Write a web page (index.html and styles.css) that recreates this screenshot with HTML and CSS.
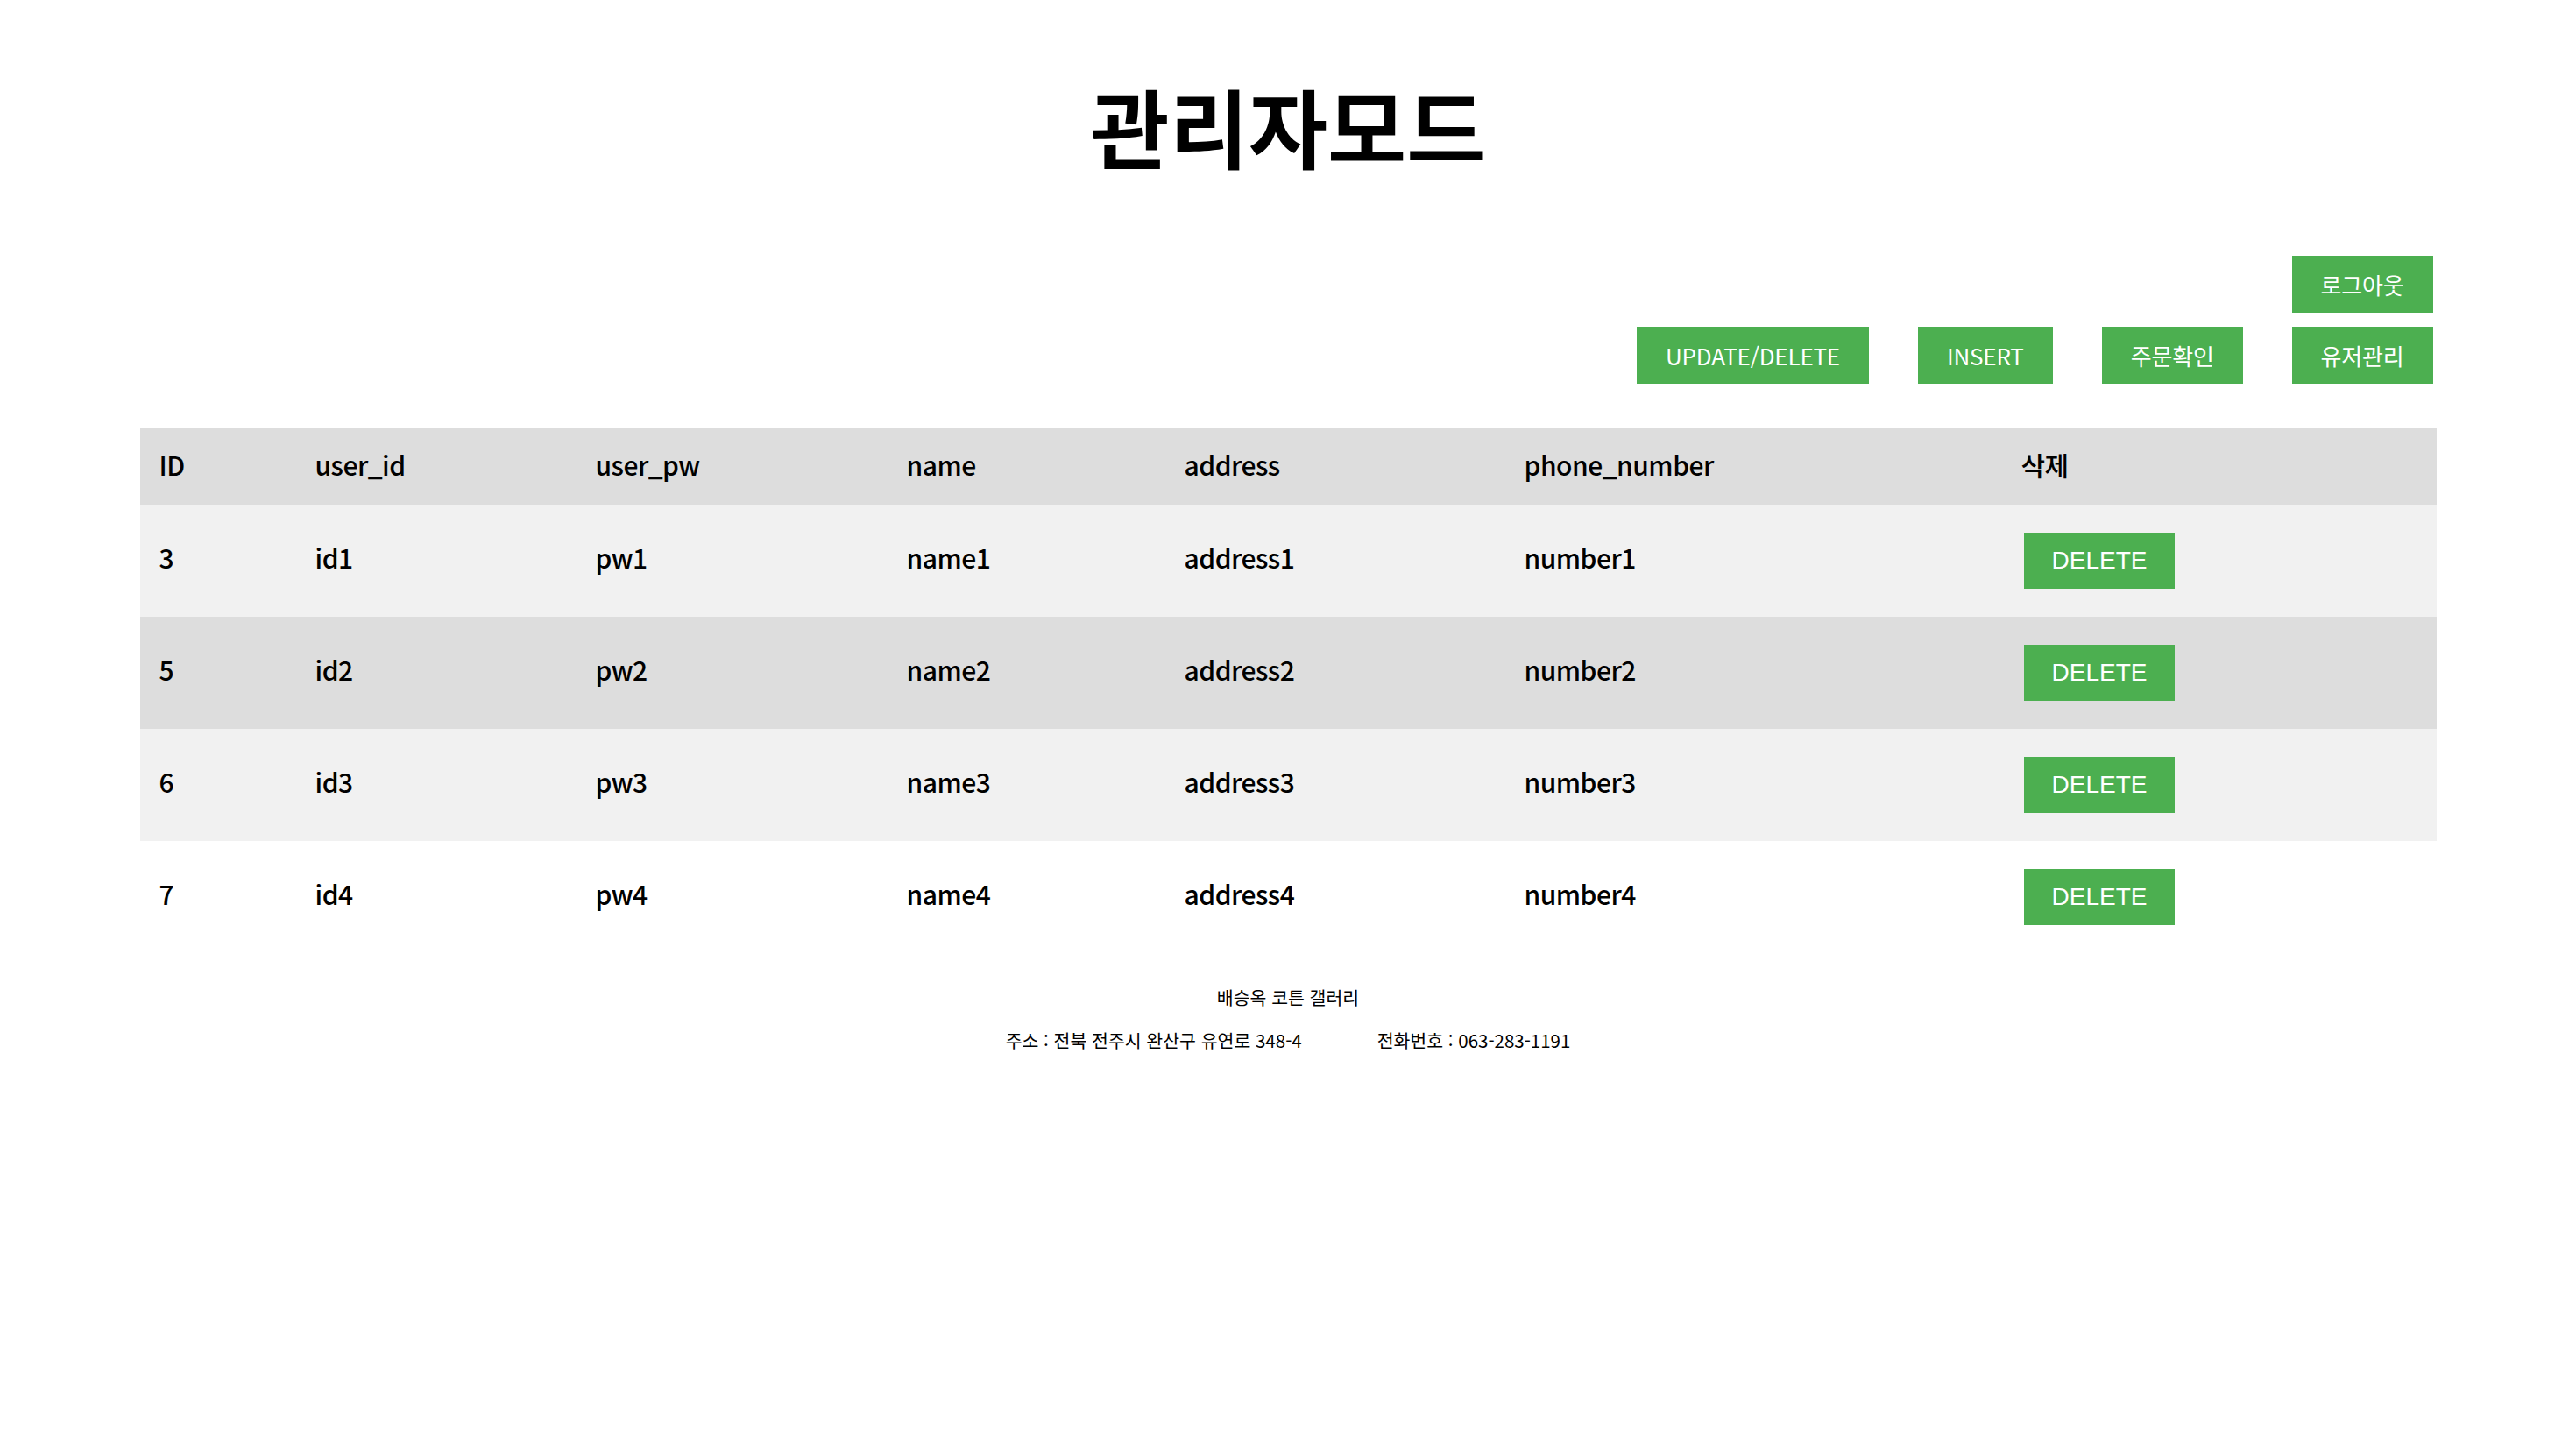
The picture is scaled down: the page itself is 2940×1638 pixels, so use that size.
FILE: index.html
```html
<!DOCTYPE html>
<html lang="ko">
<head>
<meta charset="utf-8">
<title>관리자모드</title>
<link rel="stylesheet" href="styles.css">
</head>
<body>
<header class="page-head">
  <h1 class="title">관리자모드</h1>
</header>
<nav class="actions">
  <div class="action-row">
    <a class="btn" href="#">로그아웃</a>
  </div>
  <div class="action-row">
    <a class="btn" href="#">UPDATE/DELETE</a>
    <a class="btn" href="#">INSERT</a>
    <a class="btn" href="#">주문확인</a>
    <a class="btn" href="#">유저관리</a>
  </div>
</nav>
<table class="users">
  <colgroup>
    <col class="c1"><col class="c2"><col class="c3"><col class="c4"><col class="c5"><col class="c6"><col class="c7">
  </colgroup>
  <thead>
    <tr><th>ID</th><th>user_id</th><th>user_pw</th><th>name</th><th>address</th><th>phone_number</th><th>삭제</th></tr>
  </thead>
  <tbody>
    <tr class="odd"><td>3</td><td>id1</td><td>pw1</td><td>name1</td><td>address1</td><td>number1</td><td><button class="del">DELETE</button></td></tr>
    <tr class="even"><td>5</td><td>id2</td><td>pw2</td><td>name2</td><td>address2</td><td>number2</td><td><button class="del">DELETE</button></td></tr>
    <tr class="odd"><td>6</td><td>id3</td><td>pw3</td><td>name3</td><td>address3</td><td>number3</td><td><button class="del">DELETE</button></td></tr>
    <tr class="plain"><td>7</td><td>id4</td><td>pw4</td><td>name4</td><td>address4</td><td>number4</td><td><button class="del">DELETE</button></td></tr>
  </tbody>
</table>
<footer class="foot">
  <p class="shop">배승옥 코튼 갤러리</p>
  <p class="info"><span>주소 : 전북 전주시 완산구 유연로 348-4</span><span>전화번호 : 063-283-1191</span></p>
</footer>
</body>
</html>
```

FILE: styles.css
```css
html, body {
  margin: 0;
  padding: 0;
  background: #ffffff;
}
body {
  font-family: "Noto Sans CJK KR", "Noto Sans", sans-serif;
  color: #000;
}
.page-head {
  padding-top: 74px;
}
.title {
  margin: 0;
  text-align: center;
  font-size: 98px;
  font-weight: 700;
  line-height: 136px;
}
.actions {
  width: 2621px;
  margin: 82px auto 0;
  display: flex;
  flex-direction: column;
  align-items: flex-end;
  gap: 16px;
  padding-right: 4px;
  box-sizing: border-box;
}
.action-row {
  display: flex;
  gap: 56px;
}
.btn {
  display: block;
  background: #4caf50;
  color: #fff;
  text-decoration: none;
  font-size: 26px;
  letter-spacing: -0.2px;
  line-height: 65px;
  height: 65px;
  padding: 0 33px;
}
.users {
  width: 2621px;
  margin: 51px auto 0;
  border-collapse: collapse;
  table-layout: fixed;
  font-size: 30px;
  letter-spacing: -0.5px;
  font-weight: 500;
}
.c1 { width: 178px; }
.c2 { width: 320px; }
.c3 { width: 355px; }
.c4 { width: 317px; }
.c5 { width: 388px; }
.c6 { width: 567px; }
.c7 { width: 496px; }
.users th {
  background: #dddddd;
  text-align: left;
  font-weight: 500;
  height: 87px;
  padding: 0 0 6px 22px;
  box-sizing: border-box;
  vertical-align: middle;
}
.users td {
  padding: 32px 0 32px 22px;
  vertical-align: baseline;
  text-align: left;
}
.users tr.odd td { background: #f1f1f1; }
.users tr.even td { background: #dddddd; }
.users tr.plain td { background: #ffffff; }
.del {
  font-family: "Liberation Sans", Arial, sans-serif;
  font-size: 28px;
  letter-spacing: 0;
  background: #4caf50;
  color: #fff;
  border: 0;
  margin: 0 0 0 3px;
  padding: 0 32px;
  height: 64px;
  line-height: 64px;
  width: 172px;
  cursor: pointer;
}
.foot {
  margin-top: 35px;
  text-align: center;
  font-size: 20.5px;
}
.shop {
  margin: 0;
  line-height: 30px;
}
.info {
  margin: 19px 0 0;
  line-height: 30px;
  display: flex;
  justify-content: center;
  gap: 86px;
}
```
